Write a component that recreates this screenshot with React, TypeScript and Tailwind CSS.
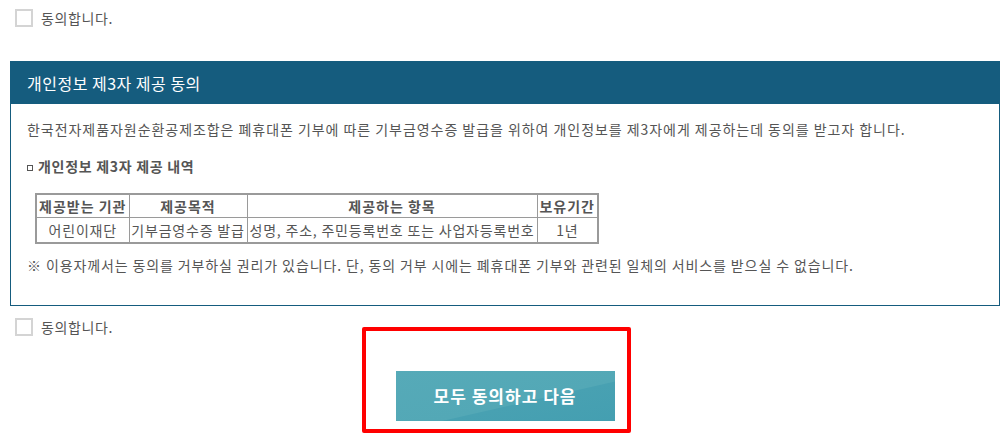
import React from "react";

function Check({ label }: { label: string }) {
  return (
    <div className="flex items-center h-[18px] pl-[15px]">
      <span className="block w-[18px] h-[18px] border-2 border-[#d4d4d4] bg-white" />
      <span className="ml-[8px] text-[14px] tracking-[0.6px] leading-[18px] text-[#555]">{label}</span>
    </div>
  );
}

export default function App() {
  const th = "border border-[#9a9a9a] font-bold text-[#555] text-[14px] tracking-[1px] leading-[22px] px-[1px] text-center whitespace-nowrap";
  const td = "border border-[#9a9a9a] text-[#555] text-[14px] tracking-[0.8px] leading-[24px] px-[1px] text-center whitespace-nowrap";
  return (
    <div
      className="relative w-[1004px] h-[436px] bg-white overflow-hidden text-[#555]"
      style={{ fontFamily: '"Noto Sans CJK KR", "Noto Sans", sans-serif' }}
    >
      <div className="pt-[9px]">
        <Check label="동의합니다." />
      </div>

      <div className="mt-[34px] ml-[10px] w-[990px] border border-[#155c7e]">
        <div className="h-[42px] bg-[#155c7e] px-[16px] flex items-center text-white text-[16px] tracking-[0.5px]">
          개인정보 제3자 제공 동의
        </div>
        <div className="px-[16px] pt-[15px] pb-[30px]">
          <p className="text-[14px] tracking-[0.95px] leading-[20px] whitespace-nowrap">
            한국전자제품자원순환공제조합은 폐휴대폰 기부에 따른 기부금영수증 발급을 위하여 개인정보를 제3자에게 제공하는데 동의를 받고자 합니다.
          </p>
          <p className="mt-[17px] text-[14px] tracking-[0.7px] leading-[20px] font-bold flex items-center">
            <span className="inline-block w-[6px] h-[6px] border border-[#555] mr-[5px] mt-[3px]" />
            개인정보 제3자 제공 내역
          </p>
          <table className="mt-[17px] ml-[8px] border-collapse border-2 border-[#9a9a9a]">
            <thead>
              <tr>
                <th className={th + " w-[93px]"}>제공받는 기관</th>
                <th className={th + " w-[118px]"}>제공목적</th>
                <th className={th + " w-[290px]"}>제공하는 항목</th>
                <th className={th + " w-[61px]"}>보유기간</th>
              </tr>
            </thead>
            <tbody>
              <tr>
                <td className={td}>어린이재단</td>
                <td className={td}>기부금영수증 발급</td>
                <td className={td}>성명, 주소, 주민등록번호 또는 사업자등록번호</td>
                <td className={td}>1년</td>
              </tr>
            </tbody>
          </table>
          <p className="mt-[11px] text-[14px] tracking-[0.88px] leading-[20px] whitespace-nowrap">
            ※ 이용자께서는 동의를 거부하실 권리가 있습니다. 단, 동의 거부 시에는 폐휴대폰 기부와 관련된 일체의 서비스를 받으실 수 없습니다.
          </p>
        </div>
      </div>

      <div className="mt-[12px]">
        <Check label="동의합니다." />
      </div>

      <div className="ml-[10px] w-[990px] mt-[35px] flex justify-center">
        <button className="w-[219px] h-[50px] text-white font-bold text-[17px] tracking-[1px] bg-[linear-gradient(to_bottom_right,#56aab8_0%,#53a8b6_60%,#48a1b2_61%,#449fb1_100%)]">
          모두 동의하고 다음
        </button>
      </div>

      <div className="absolute left-[362px] top-[327px] w-[269px] h-[106px] border-4 border-[#ff0000] rounded-[2px] pointer-events-none" />
    </div>
  );
}
